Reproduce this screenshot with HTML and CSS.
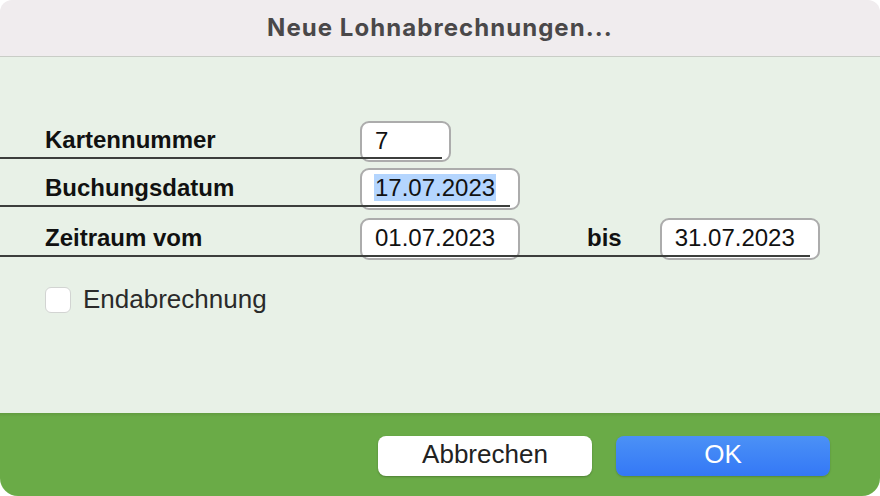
FILE: index.html
```html
<!DOCTYPE html>
<html lang="de">
<head>
<meta charset="utf-8">
<title>Neue Lohnabrechnungen...</title>
<link rel="stylesheet" href="styles.css">
</head>
<body>
<div class="window">
  <header class="titlebar">Neue Lohnabrechnungen...</header>
  <main class="content">
    <div class="form">
      <div class="row row-1">
        <span class="label">Kartennummer</span>
        <div class="field field-short">7</div>
      </div>
      <div class="row row-2">
        <span class="label">Buchungsdatum</span>
        <div class="field"><span class="selected">17.07.2023</span></div>
      </div>
      <div class="row row-3">
        <span class="label">Zeitraum vom</span>
        <div class="field">01.07.2023</div>
        <span class="label label-bis">bis</span>
        <div class="field">31.07.2023</div>
      </div>
    </div>
    <label class="check">
      <span class="box"></span>
      <span class="check-text">Endabrechnung</span>
    </label>
  </main>
  <footer class="footer">
    <button class="btn btn-cancel" type="button">Abbrechen</button>
    <button class="btn btn-ok" type="button">OK</button>
  </footer>
</div>
</body>
</html>
```
FILE: styles.css
```css
html, body {
  margin: 0;
  padding: 0;
  background: #ffffff;
}

.window {
  width: 880px;
  height: 496px;
  display: flex;
  flex-direction: column;
  border-radius: 12px 12px 18px 18px;
  overflow: hidden;
  font-family: "Liberation Sans", Arial, sans-serif;
}

.titlebar {
  flex: 0 0 57px;
  height: 57px;
  box-sizing: border-box;
  display: flex;
  align-items: center;
  justify-content: center;
  background: #f0ecee;
  border-bottom: 1px solid #c9cdc6;
  font-family: Inter, "Liberation Sans", sans-serif;
  font-weight: 700;
  font-size: 24px;
  letter-spacing: 1.05px;
  color: #4a4849;
  padding-bottom: 1px;
}

.content {
  flex: 1 1 auto;
  background: #e8f1e7;
  padding-top: 64px;
  box-sizing: border-box;
}

.form {
  display: flex;
  flex-direction: column;
}

.row {
  position: relative;
  display: flex;
  align-items: center;
  padding-left: 45px;
}

.row-2 { margin-top: 6px; }
.row-3 { margin-top: 8px; }

.row::after {
  content: "";
  position: absolute;
  left: 0;
  bottom: 3px;
  height: 2px;
  background: #3c3e3c;
}
.row-1::after { width: 442px; }
.row-2::after { width: 510px; }
.row-3::after { width: 810px; }

.label {
  width: 315px;
  font-weight: 700;
  font-size: 24px;
  color: #111111;
  margin-top: -3px;
}

.label-bis {
  width: auto;
  margin-left: 67px;
  margin-right: 38px;
}

.field {
  width: 160px;
  height: 42px;
  box-sizing: border-box;
  background: #ffffff;
  border: 2px solid #acacac;
  border-radius: 9px;
  padding-left: 13px;
  font-size: 24px;
  line-height: 36px;
  color: #111111;
}

.row-1 .field { height: 41px; }

.field-short {
  width: 91px;
}

.selected {
  background: #b4d5fe;
  display: inline-block;
  line-height: 27px;
  padding: 0 1px;
  margin-left: -1px;
}

.check {
  display: flex;
  align-items: center;
  margin-top: 24px;
  padding-left: 45px;
}

.box {
  width: 26px;
  height: 26px;
  box-sizing: border-box;
  background: #ffffff;
  border: 1px solid #d2d4d2;
  border-radius: 6px;
}

.check-text {
  margin-left: 12px;
  font-size: 26px;
  color: #2a2a2a;
}

.footer {
  flex: 0 0 83px;
  display: flex;
  justify-content: flex-end;
  align-items: flex-start;
  gap: 24px;
  padding: 23px 50px 0 0;
  box-sizing: border-box;
  background: linear-gradient(#629c40 0px, #6aab47 4px, #6aab47 100%);
}

.btn {
  width: 214px;
  height: 40px;
  border: none;
  border-radius: 8px;
  font-family: "Liberation Sans", Arial, sans-serif;
  font-size: 26px;
  padding: 0 0 4px 0;
  cursor: default;
}

.btn-cancel {
  background: #ffffff;
  color: #222222;
  box-shadow: 0 1px 2px rgba(0, 0, 0, 0.25);
}

.btn-ok {
  background: linear-gradient(#4b91f6, #3478f6);
  color: #ffffff;
  box-shadow: 0 1px 2px rgba(0, 0, 0, 0.2);
}
```
